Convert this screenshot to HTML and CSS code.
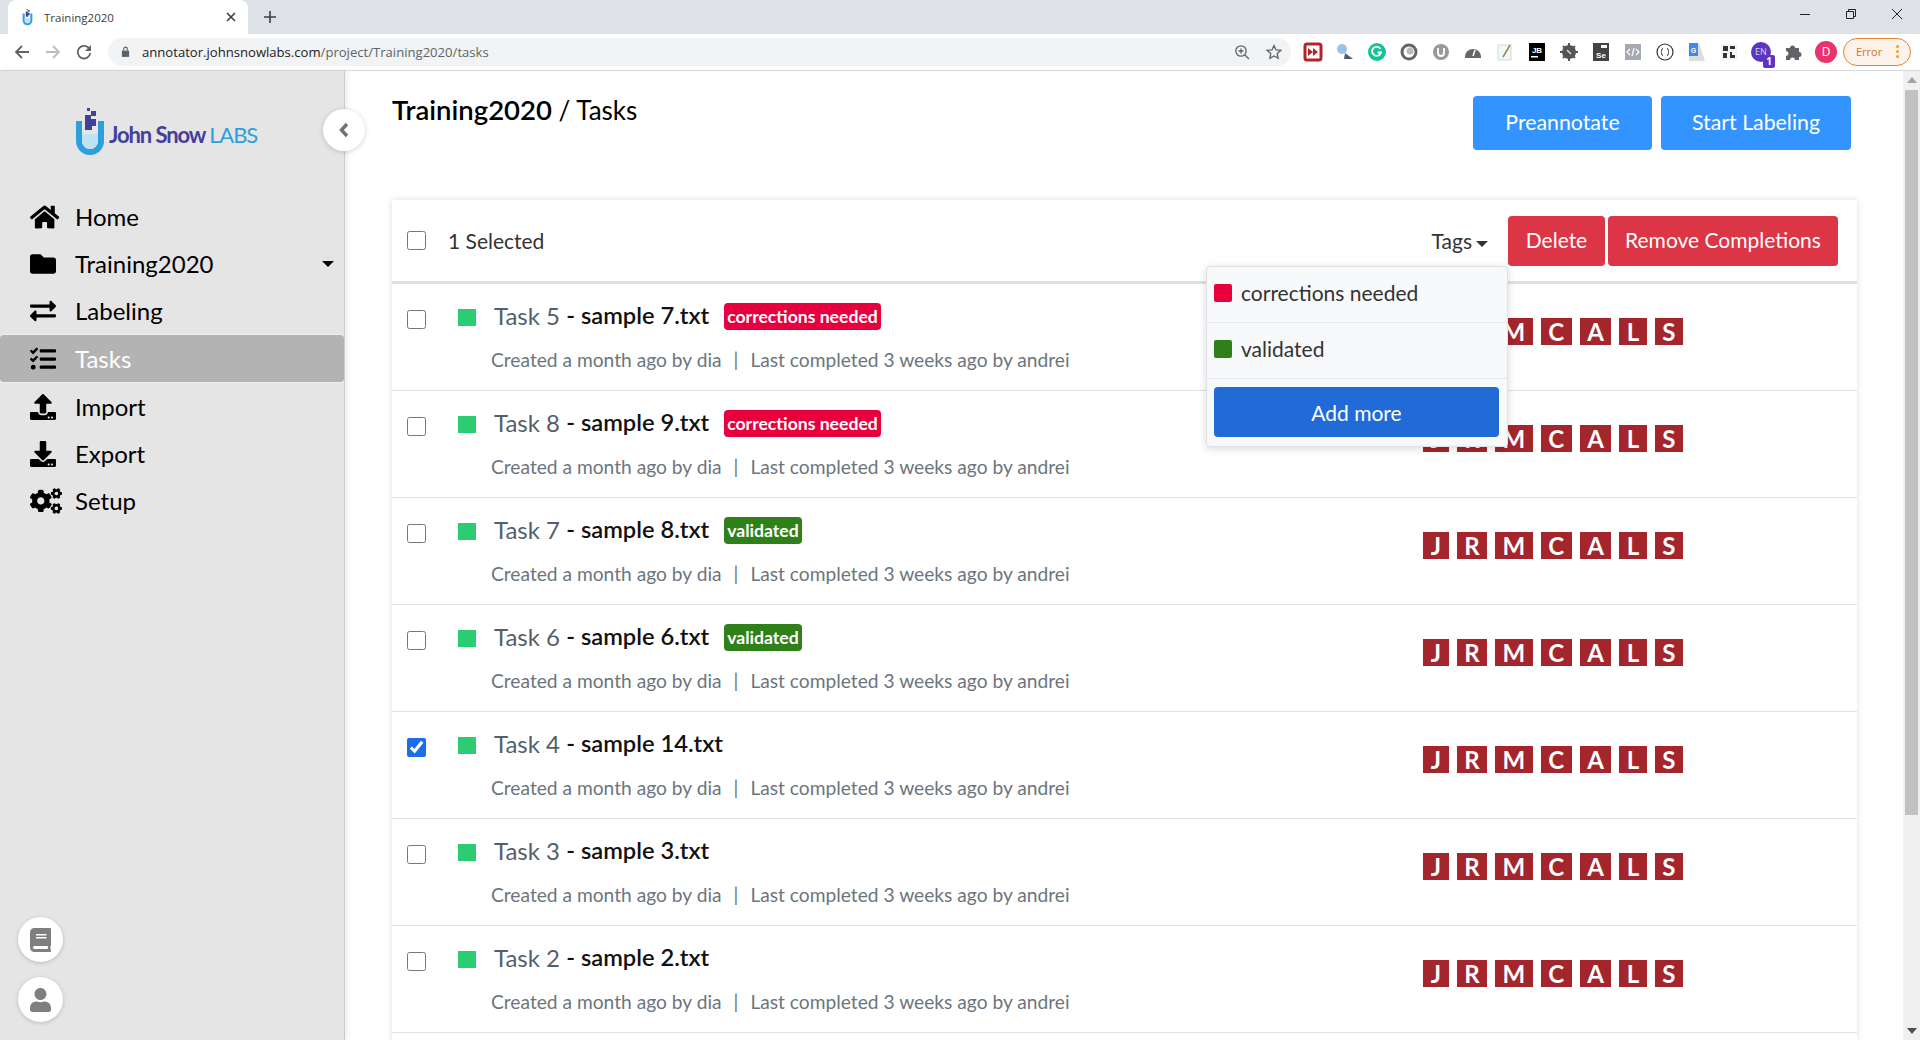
FILE: index.html
```html
<!DOCTYPE html>
<html lang="en">
<head>
    <meta charset="UTF-8">
    <title>Training2020</title>
    <link rel="stylesheet" href="styles.css">
</head>
<body>

<svg class="sprite" xmlns="http://www.w3.org/2000/svg">
    <symbol id="i-home" viewBox="0 0 576 512" preserveAspectRatio="xMinYMid"><path d="M280.37 148.26L96 300.11V464a16 16 0 0 0 16 16l112.06-.29a16 16 0 0 0 15.92-16V368a16 16 0 0 1 16-16h64a16 16 0 0 1 16 16v95.64a16 16 0 0 0 16 16.05L464 480a16 16 0 0 0 16-16V300L295.67 148.26a12.19 12.19 0 0 0-15.3 0zM571.6 251.47L488 182.56V44.05a12 12 0 0 0-12-12h-56a12 12 0 0 0-12 12v72.61L318.47 43a48 48 0 0 0-61 0L4.34 251.47a12 12 0 0 0-1.6 16.9l25.5 31A12 12 0 0 0 45.15 301l235.22-193.74a12.19 12.19 0 0 1 15.3 0L530.9 301a12 12 0 0 0 16.9-1.6l25.5-31a12 12 0 0 0-1.7-16.93z"/></symbol>
    <symbol id="i-folder" viewBox="0 0 512 512" preserveAspectRatio="xMinYMid"><path d="M464 128H272l-64-64H48C21.49 64 0 85.49 0 112v288c0 26.51 21.49 48 48 48h416c26.51 0 48-21.49 48-48V176c0-26.51-21.49-48-48-48z"/></symbol>
    <symbol id="i-exchange" viewBox="0 0 512 512" preserveAspectRatio="xMinYMid"><path d="M0 168v-16c0-13.255 10.745-24 24-24h360V80c0-21.367 25.899-32.042 40.971-16.971l80 80c9.372 9.373 9.372 24.569 0 33.941l-80 80C409.956 271.982 384 261.456 384 240v-48H24c-13.255 0-24-10.745-24-24zm488 152H128v-48c0-21.314-25.862-32.08-40.971-16.971l-80 80c-9.372 9.373-9.372 24.569 0 33.941l80 80C102.057 463.997 128 453.437 128 432v-48h360c13.255 0 24-10.745 24-24v-16c0-13.255-10.745-24-24-24z"/></symbol>
    <symbol id="i-tasks" viewBox="0 0 512 512" preserveAspectRatio="xMinYMid"><path d="M139.61 35.5a12 12 0 0 0-17 0L58.93 98.81l-22.7-22.12a12 12 0 0 0-17 0L3.53 92.41a12 12 0 0 0 0 17l47.59 47.4a12.78 12.78 0 0 0 17.61 0l15.59-15.62L156.52 69a12.09 12.09 0 0 0 .09-17zm0 159.19a12 12 0 0 0-17 0l-63.68 63.72-22.7-22.1a12 12 0 0 0-17 0L3.53 252a12 12 0 0 0 0 17L51 316.5a12.77 12.77 0 0 0 17.6 0l15.7-15.69 72.2-72.22a12 12 0 0 0 .09-16.9zM64 368c-26.49 0-48.59 21.5-48.59 48S37.53 464 64 464a48 48 0 0 0 0-96zm432 16H208a16 16 0 0 0-16 16v32a16 16 0 0 0 16 16h288a16 16 0 0 0 16-16v-32a16 16 0 0 0-16-16zm0-320H208a16 16 0 0 0-16 16v32a16 16 0 0 0 16 16h288a16 16 0 0 0 16-16V80a16 16 0 0 0-16-16zm0 160H208a16 16 0 0 0-16 16v32a16 16 0 0 0 16 16h288a16 16 0 0 0 16-16v-32a16 16 0 0 0-16-16z"/></symbol>
    <symbol id="i-upload" viewBox="0 0 512 512" preserveAspectRatio="xMinYMid"><path d="M296 384h-80c-13.3 0-24-10.7-24-24V192h-87.7c-17.8 0-26.7-21.5-14.1-34.1L242.3 5.7c7.5-7.5 19.8-7.5 27.3 0l152.2 152.2c12.6 12.6 3.7 34.1-14.1 34.1H320v168c0 13.3-10.7 24-24 24zm216-8v112c0 13.3-10.7 24-24 24H24c-13.3 0-24-10.7-24-24V376c0-13.3 10.7-24 24-24h136v8c0 30.9 25.1 56 56 56h80c30.9 0 56-25.1 56-56v-8h136c13.3 0 24 10.7 24 24zm-124 88c0-11-9-20-20-20s-20 9-20 20 9 20 20 20 20-9 20-20zm64 0c0-11-9-20-20-20s-20 9-20 20 9 20 20 20 20-9 20-20z"/></symbol>
    <symbol id="i-download" viewBox="0 0 512 512" preserveAspectRatio="xMinYMid"><path d="M216 0h80c13.3 0 24 10.7 24 24v168h87.7c17.8 0 26.7 21.5 14.1 34.1L269.7 378.3c-7.5 7.5-19.8 7.5-27.3 0L90.1 226.1c-12.6-12.6-3.7-34.1 14.1-34.1H192V24c0-13.3 10.7-24 24-24zm296 376v112c0 13.3-10.7 24-24 24H24c-13.3 0-24-10.7-24-24V376c0-13.3 10.7-24 24-24h146.7l49 49c20.1 20.1 52.5 20.1 72.6 0l49-49H488c13.3 0 24 10.7 24 24zm-124 88c0-11-9-20-20-20s-20 9-20 20 9 20 20 20 20-9 20-20zm64 0c0-11-9-20-20-20s-20 9-20 20 9 20 20 20 20-9 20-20z"/></symbol>
    <symbol id="i-cogs" viewBox="0 0 640 512" preserveAspectRatio="xMinYMid"><path d="M512.1 191l-8.2 14.3c-3 5.3-9.4 7.5-15.1 5.4-11.8-4.4-22.6-10.7-32.1-18.6-4.6-3.8-5.8-10.5-2.8-15.7l8.2-14.3c-6.9-8-12.3-17.3-15.9-27.4h-16.5c-6 0-11.2-4.3-12.2-10.3-2-12-2.1-24.6 0-37.1 1-6 6.2-10.4 12.2-10.4h16.5c3.6-10.1 9-19.4 15.9-27.4l-8.2-14.3c-3-5.2-1.9-11.9 2.8-15.7 9.5-7.9 20.4-14.2 32.1-18.6 5.7-2.1 12.1.1 15.1 5.4l8.2 14.3c10.5-1.9 21.2-1.9 31.7 0L552 6.3c3-5.3 9.4-7.5 15.1-5.4 11.8 4.4 22.6 10.7 32.1 18.6 4.6 3.8 5.8 10.5 2.8 15.7l-8.2 14.3c6.9 8 12.3 17.3 15.9 27.4h16.5c6 0 11.2 4.3 12.2 10.3 2 12 2.1 24.6 0 37.1-1 6-6.2 10.4-12.2 10.4h-16.5c-3.6 10.1-9 19.4-15.9 27.4l8.2 14.3c3 5.2 1.9 11.9-2.8 15.7-9.5 7.9-20.4 14.2-32.1 18.6-5.7 2.1-12.1-.1-15.1-5.4l-8.2-14.3c-10.4 1.9-21.2 1.9-31.7 0zm-10.5-58.8c38.5 29.6 82.4-14.3 52.8-52.8-38.5-29.7-82.4 14.3-52.8 52.8zM386.3 286.1l33.7 16.8c10.1 5.8 14.5 18.1 10.5 29.1-8.9 24.2-26.4 46.4-42.6 65.8-7.4 8.9-20.2 11.1-30.3 5.3l-29.1-16.8c-16 13.7-34.6 24.6-54.9 31.7v33.6c0 11.6-8.3 21.6-19.7 23.6-24.6 4.2-50.4 4.4-75.9 0-11.5-2-20-11.9-20-23.6V418c-20.3-7.2-38.9-18-54.9-31.7L74 403c-10 5.8-22.9 3.6-30.3-5.3-16.2-19.4-33.3-41.6-42.2-65.7-4-10.9.4-23.2 10.5-29.1l33.3-16.8c-3.9-20.9-3.9-42.4 0-63.4L12 205.8c-10.1-5.8-14.6-18.1-10.5-29 8.9-24.2 26-46.4 42.2-65.8 7.4-8.9 20.2-11.1 30.3-5.3l29.1 16.8c16-13.7 34.6-24.6 54.9-31.7V57.1c0-11.5 8.2-21.5 19.6-23.5 24.6-4.2 50.5-4.4 76-.1 11.5 2 20 11.9 20 23.6v33.6c20.3 7.2 38.9 18 54.9 31.7l29.1-16.8c10-5.8 22.9-3.6 30.3 5.3 16.2 19.4 33.2 41.6 42.1 65.8 4 10.9.1 23.2-10 29.1l-33.7 16.8c3.9 21 3.9 42.5 0 63.5zm-117.6 21.1c59.2-77-28.7-164.9-105.7-105.7-59.2 77 28.7 164.9 105.7 105.7zm243.4 182.7l-8.2 14.3c-3 5.3-9.4 7.5-15.1 5.4-11.8-4.4-22.6-10.7-32.1-18.6-4.6-3.8-5.8-10.5-2.8-15.7l8.2-14.3c-6.9-8-12.3-17.3-15.9-27.4h-16.5c-6 0-11.2-4.3-12.2-10.3-2-12-2.1-24.6 0-37.1 1-6 6.2-10.4 12.2-10.4h16.5c3.6-10.1 9-19.4 15.9-27.4l-8.2-14.3c-3-5.2-1.9-11.9 2.8-15.7 9.5-7.9 20.4-14.2 32.1-18.6 5.7-2.1 12.1.1 15.1 5.4l8.2 14.3c10.5-1.9 21.2-1.9 31.7 0l8.2-14.3c3-5.3 9.4-7.5 15.1-5.4 11.8 4.4 22.6 10.7 32.1 18.6 4.6 3.8 5.8 10.5 2.8 15.7l-8.2 14.3c6.9 8 12.3 17.3 15.9 27.4h16.5c6 0 11.2 4.3 12.2 10.3 2 12 2.1 24.6 0 37.1-1 6-6.2 10.4-12.2 10.4h-16.5c-3.6 10.1-9 19.4-15.9 27.4l8.2 14.3c3 5.2 1.9 11.9-2.8 15.7-9.5 7.9-20.4 14.2-32.1 18.6-5.7 2.1-12.1-.1-15.1-5.4l-8.2-14.3c-10.4 1.9-21.2 1.9-31.7 0zM501.6 431c38.5 29.6 82.4-14.3 52.8-52.8-38.5-29.6-82.4 14.3-52.8 52.8z"/></symbol>
    <symbol id="i-book" viewBox="0 0 448 512"><path d="M448 360V24c0-13.3-10.7-24-24-24H96C43 0 0 43 0 96v320c0 53 43 96 96 96h328c13.3 0 24-10.7 24-24v-16c0-7.5-3.5-14.3-8.9-18.7-4.2-15.4-4.2-59.3 0-74.7 5.4-4.3 8.9-11.1 8.9-18.6zM128 134c0-3.3 2.7-6 6-6h212c3.3 0 6 2.7 6 6v20c0 3.3-2.7 6-6 6H134c-3.3 0-6-2.7-6-6v-20zm0 64c0-3.3 2.7-6 6-6h212c3.3 0 6 2.7 6 6v20c0 3.3-2.7 6-6 6H134c-3.3 0-6-2.7-6-6v-20zm253.4 250H96c-17.7 0-32-14.3-32-32 0-17.6 14.4-32 32-32h285.4c-1.9 17.1-1.9 46.9 0 64z"/></symbol>
    <symbol id="i-user" viewBox="0 0 448 512"><path d="M224 256c70.7 0 128-57.3 128-128S294.7 0 224 0 96 57.3 96 128s57.3 128 128 128zm89.6 32h-16.7c-22.2 10.2-46.9 16-72.9 16s-50.6-5.8-72.9-16h-16.7C60.2 288 0 348.2 0 422.4V464c0 26.5 21.5 48 48 48h352c26.5 0 48-21.5 48-48v-41.6c0-74.2-60.2-134.4-134.4-134.4z"/></symbol>
    <symbol id="i-logo" viewBox="0 0 28 49">
        <path d="M3 13v20a11 11 0 0 0 22 0V13" fill="none" stroke="#2d9fdc" stroke-width="6"/>
        <path d="M6 26h16v7a8 8 0 0 1-16 0z" fill="#bfe2f5"/>
        <path d="M9 7h6v4h5v7h-4v4H9z" fill="#43409a"/>
        <rect x="15" y="3" width="5" height="5" fill="#43409a"/>
        <rect x="11" y="0" width="3" height="3" fill="#43409a"/>
    </symbol>
</svg>

<div class="browser-tabs">
    <div class="tab">
        <svg class="tab-favicon"><use href="#i-logo"/></svg>
        <span class="tab-title">Training2020</span>
        <svg class="tab-close" viewBox="0 0 10 10"><path d="M1 1l8 8M9 1l-8 8"/></svg>
    </div>
    <svg class="tab-new" viewBox="0 0 12 12"><path d="M6 0v12M0 6h12"/></svg>
    <div class="window-controls">
        <svg viewBox="0 0 12 12"><path d="M1 6.5h10"/></svg>
        <svg viewBox="0 0 12 12"><path d="M1.5 3.5h7v7h-7zM3.5 3.5v-2h7v7h-2"/></svg>
        <svg viewBox="0 0 12 12"><path d="M1 1l10 10M11 1L1 11"/></svg>
    </div>
</div>

<div class="browser-bar">
    <svg class="nav-btn" viewBox="0 0 16 16"><path d="M15 8H2M8 2L2 8l6 6"/></svg>
    <svg class="nav-btn nav-btn-off" viewBox="0 0 16 16"><path d="M1 8h13M8 2l6 6-6 6"/></svg>
    <svg class="nav-btn" viewBox="0 0 16 16"><path d="M13.5 5A6.3 6.3 0 1 0 14.3 9"/><path class="solid" d="M15 1v6H9z"/></svg>
    <div class="omnibox">
        <svg class="lock" viewBox="0 0 10 12"><path d="M1 5h8v7H1z"/><path class="lock-hoop" d="M3 5V3.200a2 2 0 0 1 4 0V5"/></svg>
        <span class="url">annotator.johnsnowlabs.com<span class="url-path">/project/Training2020/tasks</span></span>
        <svg class="omni-icon omni-zoom" viewBox="0 0 16 16"><circle cx="7" cy="7" r="5.200"/><path d="M11 11l4 4M4.500 7h5M7 4.500v5"/></svg>
        <svg class="omni-icon" viewBox="0 0 16 16"><path d="M8 1.500l2 4.400 4.800.5-3.600 3.200 1 4.700L8 12l-4.200 2.300 1-4.700L1.200 6.400 6 5.900z"/></svg>
    </div>
    <div class="extensions">
        <svg viewBox="0 0 20 20"><rect x="2" y="2" width="16" height="16" rx="2" fill="#fff" stroke="#b3242a" stroke-width="3"/><path d="M5 6l5 4-5 4zM10 6l5 4-5 4z" fill="#b3242a"/></svg>
        <svg viewBox="0 0 20 20"><circle cx="7" cy="7" r="5" fill="#9cc3e6"/><path d="M10 11l8 6H9z" fill="#4d5a6b"/></svg>
        <svg viewBox="0 0 20 20"><circle cx="10" cy="10" r="9" fill="#15c39a"/><path d="M13.500 7a4.500 4.500 0 1 0 .5 3.500h-3.500" fill="none" stroke="#fff" stroke-width="1.800"/></svg>
        <svg viewBox="0 0 20 20"><circle cx="10" cy="10" r="7" fill="#fff" stroke="#666" stroke-width="3"/><circle cx="11" cy="9" r="3.500" fill="#bbb"/></svg>
        <svg viewBox="0 0 20 20"><circle cx="10" cy="10" r="8" fill="#999"/><path d="M7 6v5a3 3 0 0 0 6 0V6" fill="none" stroke="#fff" stroke-width="1.800"/></svg>
        <svg viewBox="0 0 20 20"><path d="M2 15a8 8 0 0 1 16 0v1H2z" fill="#666"/><path d="M10 14l2-6" stroke="#fff" stroke-width="1.500"/></svg>
        <svg viewBox="0 0 20 20"><rect x="3" y="3" width="13" height="15" fill="#f2f8f4" stroke="#cfdcd4"/><path d="M8 15l7-12" stroke="#a08050" stroke-width="1.500"/></svg>
        <svg viewBox="0 0 20 20"><rect x="2" y="1" width="16" height="18" fill="#000"/><rect x="4" y="14" width="7" height="1.500" fill="#fff"/><text x="10" y="11" class="ext-label">JB</text></svg>
        <svg viewBox="0 0 20 20"><circle cx="10" cy="10" r="7" fill="#555"/><path d="M10 1v18M1 10h18M4 4l12 12M16 4L4 16" stroke="#555" stroke-width="2"/><path d="M8 8l4 4" stroke="#ddd" stroke-width="1.500"/></svg>
        <svg viewBox="0 0 20 20"><rect x="2" y="1" width="16" height="18" fill="#444"/><rect x="10" y="3" width="6" height="3" fill="#fff"/><text x="10" y="16" class="ext-label">Se</text></svg>
        <svg viewBox="0 0 20 20"><rect x="2" y="2" width="16" height="16" fill="#a5aab2"/><path d="M7 7l-3 3 3 3M13 7l3 3-3 3M11 6l-2 8" fill="none" stroke="#fff" stroke-width="1.200"/></svg>
        <svg viewBox="0 0 20 20"><circle cx="10" cy="10" r="8" fill="#fff" stroke="#333" stroke-width="1.200"/><path d="M8 6.500c-2 0-1 3.500-2 3.500 1 0 0 3.500 2 3.500M12 6.500c2 0 1 3.500 2 3.500-1 0 0 3.500-2 3.500" fill="none" stroke="#333"/></svg>
        <svg viewBox="0 0 20 20"><path d="M2 1h10l6 18H2z" fill="#ddd"/><path d="M2 1h9v13H2z" fill="#4285f4"/><text x="6.500" y="10.500" class="ext-label ext-label-sm">G</text></svg>
        <svg viewBox="0 0 20 20"><rect x="2" y="2" width="16" height="16" fill="#f4f4f4"/><path d="M4 4h5v5H4zM11 4h5v3h-5zM4 11h4v5H4zM11 10h2v3h3v3h-5z" fill="#333"/></svg>
        <div class="ext-lang"><span class="ext-lang-code">EN</span><span class="ext-lang-count">1</span></div>
        <svg viewBox="0 0 20 20"><path d="M3 6h4a2.500 2.500 0 0 1 5 0h4v4a2.500 2.500 0 0 1 0 5v3h-4a2.500 2.500 0 0 0-5 0H3v-4a2.500 2.500 0 0 0 0-5z" fill="#5f6368"/></svg>
        <div class="profile">D</div>
    </div>
    <div class="error-pill">Error<span class="error-dots"><i></i><i></i><i></i></span></div>
</div>

<div class="page">
    <div class="sidebar">
        <div class="logo">
            <svg class="logo-mark"><use href="#i-logo"/></svg>
            <span class="logo-text">John Snow <span class="logo-labs">LABS</span></span>
        </div>
        <button class="collapse-btn"><svg viewBox="0 0 10 16"><path d="M8 2L2.500 8 8 14"/></svg></button>
        <ul class="nav">
            <li><svg class="nav-icon"><use href="#i-home"/></svg>Home</li>
            <li><svg class="nav-icon"><use href="#i-folder"/></svg>Training2020<span class="nav-caret"></span></li>
            <li><svg class="nav-icon"><use href="#i-exchange"/></svg>Labeling</li>
            <li class="active"><svg class="nav-icon"><use href="#i-tasks"/></svg>Tasks</li>
            <li><svg class="nav-icon"><use href="#i-upload"/></svg>Import</li>
            <li><svg class="nav-icon"><use href="#i-download"/></svg>Export</li>
            <li><svg class="nav-icon"><use href="#i-cogs"/></svg>Setup</li>
        </ul>
        <div class="side-actions">
            <button class="round-btn"><svg><use href="#i-book"/></svg></button>
            <button class="round-btn"><svg><use href="#i-user"/></svg></button>
        </div>
    </div>

    <div class="main">
        <div class="page-head">
            <h1><strong>Training2020</strong> / Tasks</h1>
            <div class="head-actions">
                <button class="btn btn-sky">Preannotate</button>
                <button class="btn btn-sky btn-start">Start Labeling</button>
            </div>
        </div>

        <div class="card">
            <div class="toolbar">
                <input type="checkbox" class="check">
                <span class="selected-count">1 Selected</span>
                <div class="tags-menu">
                    <span class="tags-toggle">Tags<span class="caret"></span></span>
                    <div class="dropdown">
                        <div class="dropdown-item"><span class="swatch swatch-red"></span>corrections needed</div>
                        <div class="dropdown-item"><span class="swatch swatch-green"></span>validated</div>
                        <div class="dropdown-foot"><button class="btn-add">Add more</button></div>
                    </div>
                </div>
                <button class="btn btn-red">Delete</button>
                <button class="btn btn-red btn-remove">Remove Completions</button>
            </div>

            <div class="task">
                <input type="checkbox" class="check task-check">
                <span class="status"></span>
                <div class="task-body">
                    <div class="task-title">Task 5 <b>- sample 7.txt</b><span class="badge badge-red">corrections needed</span></div>
                    <div class="task-meta">Created a month ago by dia<span class="sep">|</span>Last completed 3 weeks ago by andrei</div>
                </div>
                <div class="users"><span>J</span><span>R</span><span>M</span><span>C</span><span>A</span><span>L</span><span>S</span></div>
            </div>
            <div class="task">
                <input type="checkbox" class="check task-check">
                <span class="status"></span>
                <div class="task-body">
                    <div class="task-title">Task 8 <b>- sample 9.txt</b><span class="badge badge-red">corrections needed</span></div>
                    <div class="task-meta">Created a month ago by dia<span class="sep">|</span>Last completed 3 weeks ago by andrei</div>
                </div>
                <div class="users"><span>J</span><span>R</span><span>M</span><span>C</span><span>A</span><span>L</span><span>S</span></div>
            </div>
            <div class="task">
                <input type="checkbox" class="check task-check">
                <span class="status"></span>
                <div class="task-body">
                    <div class="task-title">Task 7 <b>- sample 8.txt</b><span class="badge badge-green">validated</span></div>
                    <div class="task-meta">Created a month ago by dia<span class="sep">|</span>Last completed 3 weeks ago by andrei</div>
                </div>
                <div class="users"><span>J</span><span>R</span><span>M</span><span>C</span><span>A</span><span>L</span><span>S</span></div>
            </div>
            <div class="task">
                <input type="checkbox" class="check task-check">
                <span class="status"></span>
                <div class="task-body">
                    <div class="task-title">Task 6 <b>- sample 6.txt</b><span class="badge badge-green">validated</span></div>
                    <div class="task-meta">Created a month ago by dia<span class="sep">|</span>Last completed 3 weeks ago by andrei</div>
                </div>
                <div class="users"><span>J</span><span>R</span><span>M</span><span>C</span><span>A</span><span>L</span><span>S</span></div>
            </div>
            <div class="task">
                <input type="checkbox" class="check task-check" checked>
                <span class="status"></span>
                <div class="task-body">
                    <div class="task-title">Task 4 <b>- sample 14.txt</b></div>
                    <div class="task-meta">Created a month ago by dia<span class="sep">|</span>Last completed 3 weeks ago by andrei</div>
                </div>
                <div class="users"><span>J</span><span>R</span><span>M</span><span>C</span><span>A</span><span>L</span><span>S</span></div>
            </div>
            <div class="task">
                <input type="checkbox" class="check task-check">
                <span class="status"></span>
                <div class="task-body">
                    <div class="task-title">Task 3 <b>- sample 3.txt</b></div>
                    <div class="task-meta">Created a month ago by dia<span class="sep">|</span>Last completed 3 weeks ago by andrei</div>
                </div>
                <div class="users"><span>J</span><span>R</span><span>M</span><span>C</span><span>A</span><span>L</span><span>S</span></div>
            </div>
            <div class="task">
                <input type="checkbox" class="check task-check">
                <span class="status"></span>
                <div class="task-body">
                    <div class="task-title">Task 2 <b>- sample 2.txt</b></div>
                    <div class="task-meta">Created a month ago by dia<span class="sep">|</span>Last completed 3 weeks ago by andrei</div>
                </div>
                <div class="users"><span>J</span><span>R</span><span>M</span><span>C</span><span>A</span><span>L</span><span>S</span></div>
            </div>
            <div class="task"></div>
        </div>
    </div>

    <div class="scrollbar">
        <span class="scroll-up"></span>
        <span class="scroll-thumb"></span>
        <span class="scroll-down"></span>
    </div>
</div>

</body>
</html>
```

FILE: styles.css
```css
html, body {
    margin:0;
    padding:0;
    height:100%;
    overflow:hidden;
    background:#fff;
    color:#000;
    font-family:Lato, "Liberation Sans", sans-serif;
}
body {
    display:flex;
    flex-direction:column;
    height:1040px;
}
button {
    font-family:inherit;
    border:0;
    margin:0;
    padding:0;
}
.sprite {
    display:none;
}

/* browser chrome */
.browser-tabs {
    display:flex;
    align-items:flex-end;
    flex:none;
    height:34px;
    background:#dee1e6;
}
.tab {
    display:flex;
    align-items:center;
    width:240px;
    height:34px;
    margin-left:8px;
    background:#fff;
    border-radius:8px 8px 0 0;
    box-sizing:border-box;
    padding:0 12px 0 14px;
}
.tab-favicon {
    width:11px;
    height:17px;
    flex:none;
}
.tab-title {
    margin-left:11px;
    font:11.5px "Open Sans", sans-serif;
    color:#3c4043;
    flex:1;
}
.tab-close {
    width:10px;
    height:10px;
    fill:none;
    stroke:#3c4043;
    stroke-width:1.6;
}
.tab-new {
    width:12px;
    height:12px;
    margin:0 0 11px 16px;
    fill:none;
    stroke:#3c4043;
    stroke-width:1.6;
}
.window-controls {
    display:flex;
    gap:34px;
    margin:0 17px 14px auto;
}
.window-controls svg {
    width:12px;
    height:12px;
    fill:none;
    stroke:#222;
    stroke-width:1;
}
.browser-bar {
    display:flex;
    align-items:center;
    flex:none;
    box-sizing:border-box;
    height:37px;
    background:#fff;
    border-bottom:1px solid #d6d8db;
    padding:0 9px 1px 14px;
}
.nav-btn {
    width:16px;
    height:16px;
    margin-right:15px;
    fill:none;
    stroke:#5f6368;
    stroke-width:1.8;
    flex:none;
}
.nav-btn-off {
    stroke:#bbbdc0;
}
.nav-btn .solid {
    fill:#5f6368;
    stroke:none;
}
.omnibox {
    display:flex;
    align-items:center;
    width:1183px;
    height:28px;
    margin-left:1px;
    box-sizing:border-box;
    padding:0 9px 0 13px;
    background:#f1f3f4;
    border-radius:14px;
    flex:none;
}
.lock {
    width:9px;
    height:11px;
    fill:#5f6368;
}
.lock-hoop {
    fill:none;
    stroke:#5f6368;
    stroke-width:1.3;
}
.url {
    margin-left:12px;
    font:13.1px "Open Sans", sans-serif;
    color:#202124;
    flex:1;
}
.url-path {
    color:#5f6368;
}
.omni-icon {
    width:16px;
    height:16px;
    margin-left:16px;
    fill:none;
    stroke:#5f6368;
    stroke-width:1.3;
}
.extensions {
    display:flex;
    align-items:center;
    gap:12px;
    margin-left:12px;
    flex:none;
}
.extensions > svg {
    width:20px;
    height:20px;
    display:block;
}
.ext-label {
    font:bold 8px "Liberation Sans", sans-serif;
    fill:#fff;
    text-anchor:middle;
}
.ext-label-sm {
    font-size:7px;
}
.ext-lang {
    position:relative;
    width:20px;
    height:20px;
    text-align:center;
    font:9px/20px "Open Sans", sans-serif;
    color:#d9d2f4;
    background:#5b35c4;
    border-radius:50%;
}
.ext-lang-count {
    position:absolute;
    right:-4px;
    bottom:-6px;
    width:12px;
    height:13px;
    line-height:13px;
    background:#5b35c4;
    border-radius:2px;
    color:#fff;
    font-weight:bold;
    font-size:10px;
}
.profile {
    width:22px;
    height:22px;
    margin-right:-1px;
    border-radius:50%;
    background:#e8336d;
    color:#fff;
    text-align:center;
    font:12px/22px "Open Sans", sans-serif;
}
.error-pill {
    display:flex;
    align-items:center;
    box-sizing:border-box;
    width:68px;
    height:28px;
    margin-left:7px;
    padding-left:12px;
    border:1px solid #e8832a;
    border-radius:14px;
    background:#fdf3ea;
    color:#d9712a;
    font:11px "Open Sans", sans-serif;
    flex:none;
}
.error-dots {
    display:flex;
    flex-direction:column;
    gap:2px;
    margin-left:14px;
}
.error-dots i {
    display:block;
    width:3px;
    height:3px;
    border-radius:50%;
    background:#e8a12a;
}

/* page */
.page {
    display:flex;
    flex:1;
    min-height:0;
}
.sidebar {
    position:relative;
    display:flex;
    flex-direction:column;
    flex:none;
    width:345px;
    box-sizing:border-box;
    background:#e5e5e5;
    border-right:1px solid #ccc;
    box-shadow:2px 0 6px rgba(0,0,0,.08);
    z-index:2;
}
.logo {
    display:flex;
    align-items:center;
    height:122px;
    padding-left:76px;
    box-sizing:border-box;
}
.logo-mark {
    width:28px;
    height:49px;
    flex:none;
}
.logo-text {
    margin-left:5px;
    padding-top:4px;
    font-size:22px;
    font-weight:700;
    letter-spacing:-1.100px;
    color:#43409a;
    white-space:nowrap;
}
.logo-labs {
    font-weight:400;
    color:#2d9fdc;
}
.collapse-btn {
    position:absolute;
    top:38px;
    right:-21px;
    width:42px;
    height:42px;
    border-radius:50%;
    background:#fff;
    box-shadow:0 1px 5px rgba(0,0,0,.18);
    display:flex;
    align-items:center;
    justify-content:center;
}
.collapse-btn svg {
    width:10px;
    height:16px;
    fill:none;
    stroke:#6f7277;
    stroke-width:3.4;
}
.nav {
    list-style:none;
    margin:0;
    padding:0;
}
.nav li {
    display:flex;
    align-items:center;
    height:47px;
    padding-left:30px;
    font-size:24px;
    color:#000;
    position:relative;
}
.nav li.active {
    height:49px;
    box-sizing:border-box;
    background:#b3b3b3;
    color:#fff;
    border-radius:4px;
    border:1px solid #f0f0f0;
    border-width:1px 0;
}
.nav-icon {
    width:32px;
    height:26px;
    margin-right:13px;
    flex:none;
    fill:#000;
}
.nav-caret {
    position:absolute;
    right:10px;
    top:21px;
    border:6px solid transparent;
    border-top-color:#000;
    border-bottom:0;
}
.side-actions {
    display:flex;
    flex-direction:column;
    gap:15px;
    margin-top:auto;
    padding:0 0 18px 18px;
}
.round-btn {
    width:45px;
    height:45px;
    border-radius:50%;
    background:#fff;
    box-shadow:0 1px 4px rgba(0,0,0,.18);
    display:flex;
    align-items:center;
    justify-content:center;
}
.round-btn svg {
    width:21px;
    height:24px;
    fill:#7f7f7f;
}

.main {
    flex:1;
    min-width:0;
    overflow:hidden;
    padding:0 46px 0 47px;
}
.page-head {
    display:flex;
    justify-content:space-between;
    height:129px;
}
.page-head h1 {
    margin:19px 0 0;
    font-size:26px;
    line-height:40px;
    font-weight:400;
}
.page-head h1 strong {
    font-family:"Lato Semibold", Lato, sans-serif;
    font-size:27.5px;
    font-weight:600;
}
.head-actions {
    display:flex;
    gap:9px;
    margin:25px 6px 0 0;
}
.btn {
    color:#fff;
    border-radius:4px;
    font-size:21px;
    padding-bottom:2px;
}
.btn-sky {
    width:179px;
    height:54px;
    font-size:21.3px;
    background:#3394ff;
}
.btn-start {
    width:190px;
}
.btn-red {
    width:97px;
    height:50px;
    background:#dc3545;
}
.btn-remove {
    width:230px;
    margin-left:3px;
}

.card {
    box-shadow:0 0 6px rgba(0,0,0,.14);
}
.toolbar {
    display:flex;
    align-items:center;
    height:84px;
    box-sizing:border-box;
    padding:0 19px 0 15px;
    border-bottom:3px solid #dee2e6;
}
.check {
    width:19px;
    height:19px;
    margin:0;
    flex:none;
    accent-color:#1a6fe8;
}
.selected-count {
    margin-left:22px;
    font-size:21px;
    color:#333;
}
.tags-menu {
    position:relative;
    margin-left:auto;
    margin-right:20px;
}
.tags-toggle {
    font-size:21px;
    color:#333;
}
.caret {
    display:inline-block;
    margin-left:4px;
    vertical-align:middle;
    border:6px solid transparent;
    border-top-color:#333;
    border-bottom:0;
}
.dropdown {
    position:absolute;
    top:38px;
    right:-20px;
    width:302px;
    height:181px;
    box-sizing:border-box;
    background:#f8f9fa;
    border:1px solid #dee2e6;
    border-radius:4px;
    box-shadow:0 2px 8px rgba(0,0,0,.15);
    z-index:5;
}
.dropdown-item {
    display:flex;
    align-items:center;
    box-sizing:border-box;
    height:56px;
    padding:0 0 4px 7px;
    font-size:21px;
    color:#333;
    border-bottom:1px solid #e4e6e9;
}
.swatch {
    width:18px;
    height:18px;
    margin-right:9px;
    border-radius:2px;
}
.swatch-red {
    background:#e8003e;
}
.swatch-green {
    background:#2f8019;
}
.dropdown-foot {
    padding:8px 8px 8px 7px;
}
.btn-add {
    display:block;
    width:100%;
    height:50px;
    border-radius:4px;
    background:#206bd6;
    color:#fff;
    font-size:21px;
}

.task {
    display:flex;
    height:107px;
    box-sizing:border-box;
    padding:0 174px 0 15px;
    border-bottom:1px solid #dee2e6;
}
.task-check {
    margin-top:26px;
}
.status {
    width:18px;
    height:17px;
    margin:25px 0 0 32px;
    background:#2bcc72;
    flex:none;
}
.task-body {
    flex:1;
    padding-left:16px;
}
.task-title {
    display:flex;
    align-items:center;
    margin:16px 0 0 2px;
    height:30px;
    font-size:24px;
    color:#555f6b;
    white-space:pre;
}
.task-title b {
    font-family:"Lato Semibold", Lato, sans-serif;
    font-size:23.7px;
    font-weight:600;
    color:#111;
}
.badge {
    margin:3px 0 0 15px;
    height:27px;
    padding:0 3px;
    border-radius:4px;
    font-size:17.6px;
    line-height:27px;
    font-weight:700;
    color:#fff;
}
.badge-red {
    background:#e8003e;
}
.badge-green {
    background:#2f8019;
}
.task-meta {
    margin:18px 0 0 -1px;
    font-size:19.2px;
    color:#6c757d;
}
.sep {
    margin:0 12px;
}
.users {
    display:flex;
    gap:8px;
    margin-top:34px;
    height:27px;
}
.users span {
    height:27px;
    padding:0 7.5px;
    background:#a4262c;
    color:#fff;
    font-size:24px;
    line-height:27px;
    font-weight:700;
}

.scrollbar {
    display:flex;
    flex-direction:column;
    align-items:center;
    flex:none;
    width:17px;
    background:#f0f0f0;
    padding:6px 0 6px;
    box-sizing:border-box;
}
.scroll-up {
    border:5px solid transparent;
    border-bottom:6px solid #a3a3a3;
    border-top:0;
}
.scroll-thumb {
    width:13px;
    height:725px;
    margin-top:7px;
    background:#c1c1c1;
}
.scroll-down {
    margin-top:auto;
    border:5px solid transparent;
    border-top:6px solid #505050;
    border-bottom:0;
}
```
